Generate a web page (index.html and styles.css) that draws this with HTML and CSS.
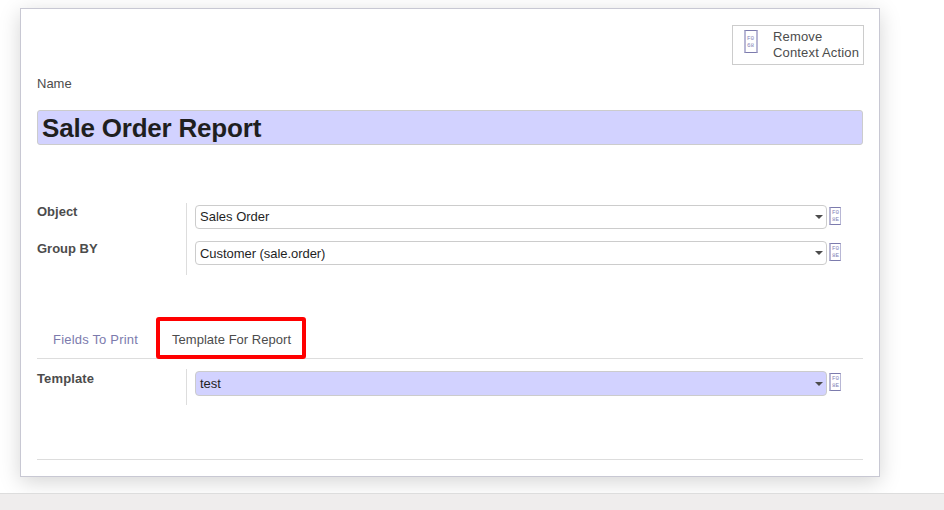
FILE: index.html
```html
<!DOCTYPE html>
<html lang="en">
<head>
<meta charset="utf-8">
<title>Sale Order Report</title>
<link rel="stylesheet" href="styles.css">
</head>
<body>
<main class="sheet">
  <div class="button-box">
    <button class="stat-button"><span class="glyph glyph-large"><span>F0</span><span>68</span></span><span class="stat-text">Remove<br>Context Action</span></button>
  </div>
  <label class="name-label">Name</label>
  <div class="name-input">Sale Order Report</div>
  <section class="group group-main">
    <div class="labels"><label>Object</label><label>Group BY</label></div>
    <div class="fields">
      <div class="row"><div class="select"><span>Sales Order</span><i class="caret"></i></div><span class="glyph"><span>F0</span><span>8E</span></span></div>
      <div class="row"><div class="select select-low"><span>Customer (sale.order)</span><i class="caret"></i></div><span class="glyph"><span>F0</span><span>8E</span></span></div>
    </div>
  </section>
  <nav class="tabs"><a class="tab">Fields To Print</a><a class="tab active">Template For Report</a></nav>
  <section class="group group-template">
    <div class="labels"><label>Template</label></div>
    <div class="fields">
      <div class="row"><div class="select required"><span>test</span><i class="caret"></i></div><span class="glyph"><span>F0</span><span>8E</span></span></div>
    </div>
  </section>
</main>
<footer class="footer"></footer>
</body>
</html>
```

FILE: styles.css
```css
* { box-sizing: border-box; }
body {
  margin: 0;
  height: 510px;
  padding-top: 8px;
  overflow: hidden;
  background: #fff;
  color: #4c4c4c;
  font: 13px/16px "Liberation Sans", Arial, sans-serif;
}
.sheet {
  width: 860px;
  height: 469px;
  margin-left: 20px;
  padding: 16px;
  border: 1px solid #c8c8d3;
  background: #fff;
  box-shadow: 0 5px 20px rgba(0, 0, 0, .17);
}
.button-box {
  display: flex;
  justify-content: flex-end;
  height: 51px;
  margin-right: -1px;
}
.stat-button {
  display: flex;
  width: 132px;
  height: 40px;
  padding: 3px 0 0 11px;
  border: 1px solid #ccc;
  background: #fff;
  color: inherit;
  font: inherit;
  text-align: left;
  white-space: nowrap;
}
.stat-text { margin-left: 15px; letter-spacing: .16px; }
.glyph {
  display: flex;
  flex-direction: column;
  flex: none;
  width: 12px;
  height: 18px;
  margin: 2px 0 0 2px;
  padding: 1px 0 0 1px;
  overflow: hidden;
  border: 1px solid #7c7bad;
  border-left: 2px solid #b8b7d5;
  border-right: 1px solid #b8b7d5;
  color: #8483b8;
  font: 6px/7px "Liberation Mono", monospace;
}
.glyph-large {
  width: 14px;
  height: 23px;
  margin: 1px 0 0;
  padding: 4px 0 0 1px;
  border-right-width: 2px;
}
.name-label { display: block; height: 34px; }
.name-input {
  height: 35px;
  padding: 0 4px;
  border: 1px solid #ccc;
  border-radius: 3px;
  background: #d2d2ff;
  color: #1f1f1f;
  font-size: 26px;
  font-weight: bold;
  letter-spacing: -.2px;
  line-height: 34px;
}
.group { display: flex; }
.group-main { height: 72px; margin-top: 58px; }
.group-template { height: 91px; border-bottom: 1px solid #ddd; margin-top: 10px; }
.labels { width: 149px; font-weight: bold; padding-top: 1px; }
.labels label { display: block; height: 37px; }
.group-template .labels { padding-top: 2px; letter-spacing: .12px; }
.fields {
  flex: 1;
  border-left: 1px solid #ddd;
  padding: 2px 0 0 8px;
}
.group-template .fields { height: 36px; }
.row { display: flex; height: 36px; }
.select {
  display: flex;
  align-items: center;
  justify-content: space-between;
  width: 632px;
  height: 24px;
  padding: 0 3px 0 4px;
  border: 1px solid #ccc;
  border-radius: 4px;
  color: #1f1f1f;
}
.select-low span { padding-top: 2px; letter-spacing: -.05px; }
.required { height: 25px; background: #d2d2ff; }
.caret {
  width: 8px;
  border: 4px solid transparent;
  border-top-color: #4c4c4c;
  border-bottom: 0;
}
.tabs {
  display: flex;
  height: 42px;
  margin-top: 42px;
  border-bottom: 1px solid #ddd;
}
.tab {
  width: 119px;
  padding: 15px 0 0 16px;
  color: #7c7bad;
  letter-spacing: .19px;
}
.tab.active {
  width: 150px;
  height: 42px;
  padding: 11px 0 0 12px;
  border: 4px solid #f00;
  border-radius: 3px;
  color: #4c4c4c;
  letter-spacing: .03px;
  white-space: nowrap;
}
.footer {
  height: 17px;
  margin-top: 16px;
  border-top: 1px solid #ddd;
  background: rgba(238, 236, 236, .95);
}
```
